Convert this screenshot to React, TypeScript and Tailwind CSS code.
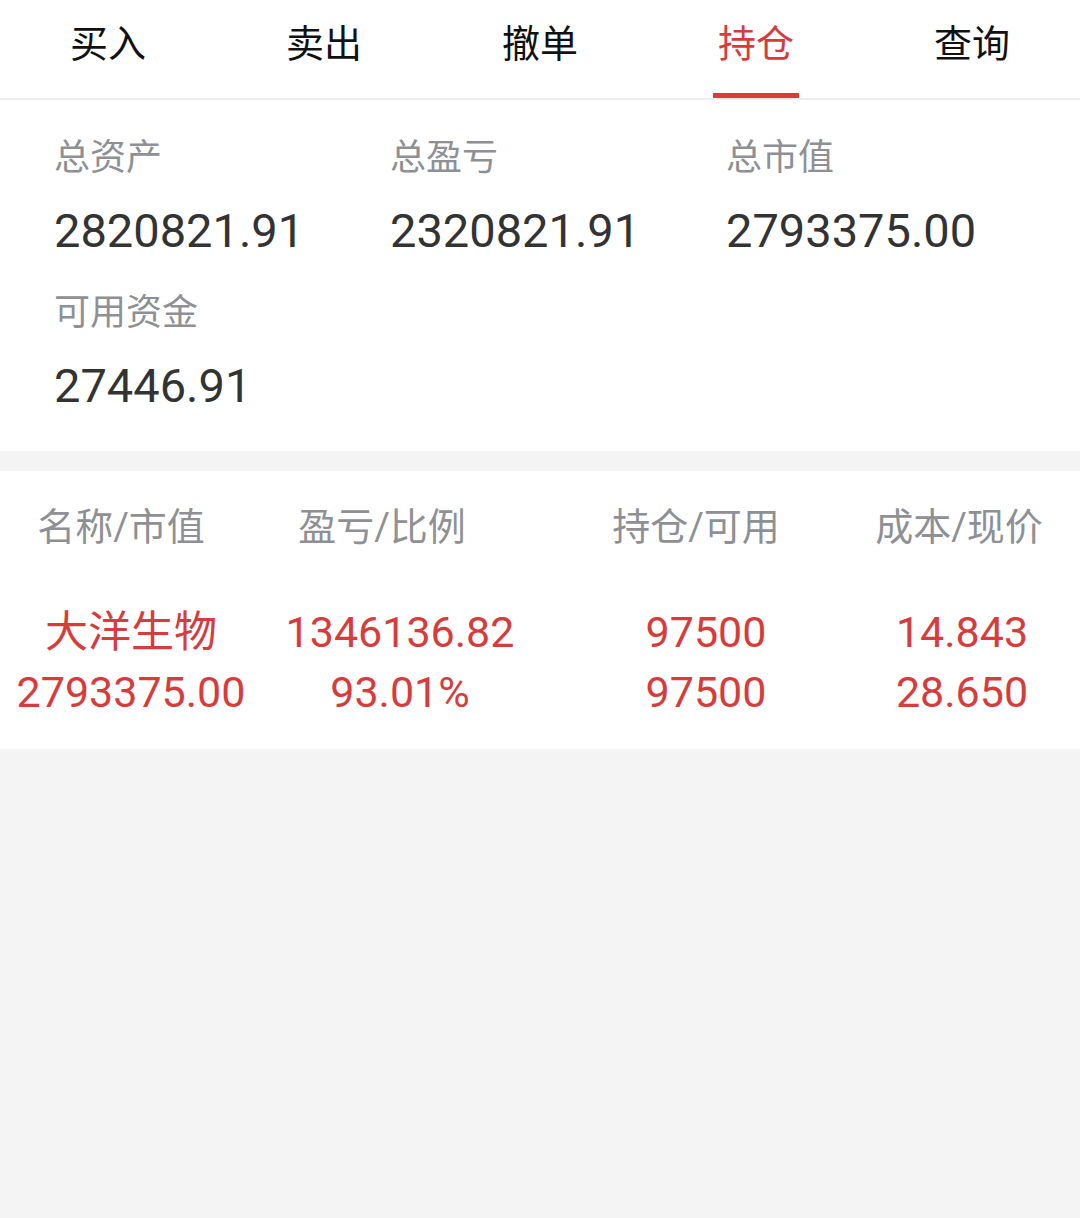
import React from "react";

const font = { fontFamily: "Roboto, 'Noto Sans CJK SC', sans-serif" };

const tabs = ["买入", "卖出", "撤单", "持仓", "查询"];
const activeTab = "持仓";

const summary = [
  { label: "总资产", value: "2820821.91" },
  { label: "总盈亏", value: "2320821.91" },
  { label: "总市值", value: "2793375.00" },
  { label: "可用资金", value: "27446.91" },
];

const headers = ["名称/市值", "盈亏/比例", "持仓/可用", "成本/现价"];

const rows = [
  ["大洋生物", "1346136.82", "97500", "14.843"],
  ["2793375.00", "93.01%", "97500", "28.650"],
];

export default function App() {
  return (
    <div className="w-[1080px] min-h-[1218px] bg-[#f4f4f4]" style={font}>
      {/* Tabs */}
      <div className="grid grid-cols-5 h-[100px] bg-white border-b-2 border-[#eeeeee]">
        {tabs.map((t) => (
          <div key={t} className="flex justify-center h-[98px] pt-[18px]">
            <div className="relative h-[80px]">
              <span
                className={`block text-[38px] leading-[52px] ${
                  t === activeTab ? "text-[#d73c3c]" : "text-[#111]"
                }`}
              >
                {t}
              </span>
              {t === activeTab && (
                <div className="absolute bottom-0 left-1/2 -translate-x-1/2 w-[86px] h-[5px] bg-[#d73c3c]" />
              )}
            </div>
          </div>
        ))}
      </div>

      {/* Summary */}
      <div className="bg-white pl-[54px] pt-[38px] pb-[37px] grid grid-cols-[336px_336px_336px] gap-y-[34px]">
        {summary.map((s) => (
          <div key={s.label}>
            <div className="text-[36px] leading-[40px] text-[#8e9095]">{s.label}</div>
            <div className="mt-[25px] text-[47px] leading-[56px] text-[#333]">{s.value}</div>
          </div>
        ))}
      </div>

      {/* Positions */}
      <div className="mt-[20px] bg-white pt-[34px] pb-[27px]">
        <div className="grid grid-cols-[242px_280px_348px_178px] text-[38px] leading-[44px] text-[#8e9095] text-center">
          {headers.map((h) => (
            <div key={h}>{h}</div>
          ))}
        </div>
        <div className="mt-[53px]">
          {rows.map((r, i) => (
            <div
              key={i}
              className="grid grid-cols-[262px_276px_336px_176px] text-[43px] leading-[60px] text-[#d73c3c] text-center"
            >
              {r.map((c, j) => (
                <div key={j}>{c}</div>
              ))}
            </div>
          ))}
        </div>
      </div>
    </div>
  );
}
